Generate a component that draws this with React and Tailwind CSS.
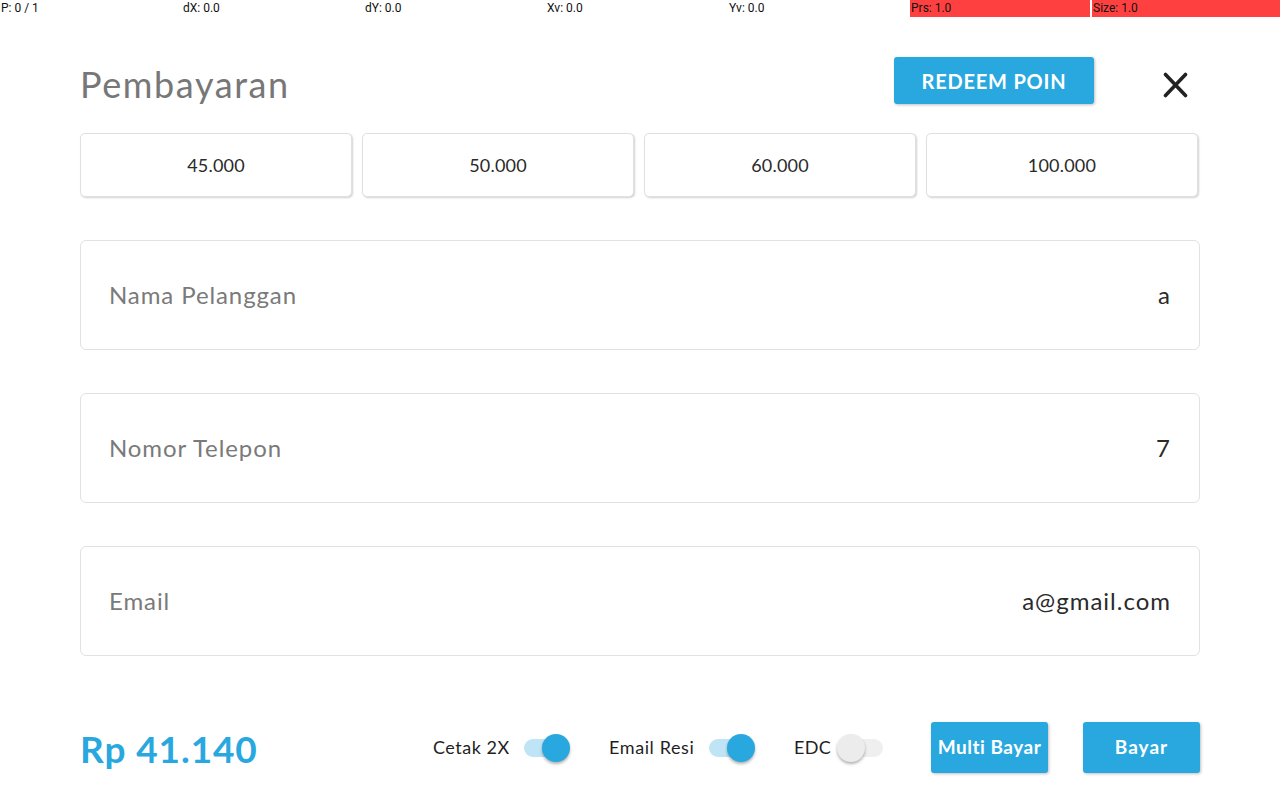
import React from "react";

const font = { fontFamily: "Lato, 'Noto Sans', sans-serif" };

function Switch({ on }) {
  return (
    <div className="relative w-[52px] h-[28px] shrink-0">
      <div
        className={
          "absolute left-[6px] right-[6px] top-[5px] h-[18px] rounded-full " +
          (on ? "bg-[#bfe4f6]" : "bg-[#efefef]")
        }
      />
      <div
        className={
          "absolute top-0 w-[28px] h-[28px] rounded-full shadow-[0_2px_3px_rgba(0,0,0,0.3)] " +
          (on ? "right-0 bg-[#29a8df]" : "left-0 bg-[#ececec]")
        }
      />
    </div>
  );
}

function Field({ label, value }) {
  return (
    <div className="h-[110px] rounded-[6px] border border-[#e2e2e2] bg-white flex items-center justify-between pl-[28px] pr-[29px]">
      <span className="text-[24px] text-[#7a7a7a] tracking-[0.9px]">{label}</span>
      <span className="text-[24px] text-[#2a2a2a] tracking-[1px] -mr-[1px]">{value}</span>
    </div>
  );
}

export default function App() {
  const debug = ["P: 0 / 1", "dX: 0.0", "dY: 0.0", "Xv: 0.0", "Yv: 0.0"];
  return (
    <div className="w-[1280px] h-[800px] bg-white overflow-hidden" style={font}>
      <div
        className="flex h-[17px] text-[12px] leading-[17px] text-[#111]"
        style={{ fontFamily: "Roboto, sans-serif" }}
      >
        {debug.map((t) => (
          <div key={t} className="w-[182px] pl-px shrink-0">
            {t}
          </div>
        ))}
        <div className="w-[180px] pl-px shrink-0 bg-[#ff4040]">Prs: 1.0</div>
        <div className="w-[2px] shrink-0" />
        <div className="flex-1 pl-px bg-[#ff4040]">Size: 1.0</div>
      </div>

      <div className="px-[80px] pt-[40px]">
        <div className="flex items-center h-[47px]">
          <h1 className="text-[36px] text-[#777777] font-normal mt-[7px] flex-1 tracking-[1.6px]">
            Pembayaran
          </h1>
          <button className="w-[200px] h-[47px] bg-[#29a8df] text-white text-[20px] font-bold rounded-[3px] shadow-[1px_1px_3px_rgba(0,0,0,0.25)] tracking-[0.8px]">
            REDEEM POIN
          </button>
          <div className="w-[106px] flex justify-end pr-[12px] mt-[8px]">
            <svg width="25" height="26" viewBox="0 0 25 26">
              <path
                d="M2.5 2.5 L22.5 23.5 M22.5 2.5 L2.5 23.5"
                stroke="#222"
                strokeWidth="3.6"
                strokeLinecap="round"
              />
            </svg>
          </div>
        </div>

        <div className="grid grid-cols-4 gap-[10px] mt-[29px] pr-[2px]">
          {["45.000", "50.000", "60.000", "100.000"].map((v) => (
            <div
              key={v}
              className="h-[64px] rounded-[5px] border border-[#e0e0e0] bg-white shadow-[1px_1px_2px_rgba(0,0,0,0.18)] flex items-center justify-center text-[18px] text-[#2a2a2a] tracking-[0.2px]"
            >
              {v}
            </div>
          ))}
        </div>

        <div className="flex flex-col gap-[43px] mt-[43px]">
          <Field label="Nama Pelanggan" value="a" />
          <Field label="Nomor Telepon" value="7" />
          <Field label="Email" value="a@gmail.com" />
        </div>

        <div className="flex items-center mt-[66px] h-[51px]">
          <div className="flex-1 text-[37px] font-bold text-[#29a8df] mt-[2px] tracking-[0.9px]">Rp 41.140</div>
          <div className="flex items-center">
            <span className="w-[77px] whitespace-nowrap text-[18px] text-[#1f1f1f] mr-[8px] tracking-[0.5px]">Cetak 2X</span>
            <Switch on />
            <span className="w-[86px] whitespace-nowrap text-[18px] text-[#1f1f1f] ml-[39px] mr-[8px] tracking-[0.6px]">Email Resi</span>
            <Switch on />
            <span className="w-[38px] whitespace-nowrap text-[18px] text-[#1f1f1f] ml-[39px] mr-[5px] tracking-[0.3px]">EDC</span>
            <Switch on={false} />
            <button className="ml-[42px] w-[117px] h-[51px] bg-[#29a8df] text-white text-[19px] font-bold rounded-[3px] shadow-[1px_1px_3px_rgba(0,0,0,0.25)] tracking-[0.5px] whitespace-nowrap">
              Multi Bayar
            </button>
            <button className="ml-[35px] w-[117px] h-[51px] bg-[#29a8df] text-white text-[19px] font-bold rounded-[3px] shadow-[1px_1px_3px_rgba(0,0,0,0.25)] tracking-[1px]">
              Bayar
            </button>
          </div>
        </div>
      </div>
    </div>
  );
}
